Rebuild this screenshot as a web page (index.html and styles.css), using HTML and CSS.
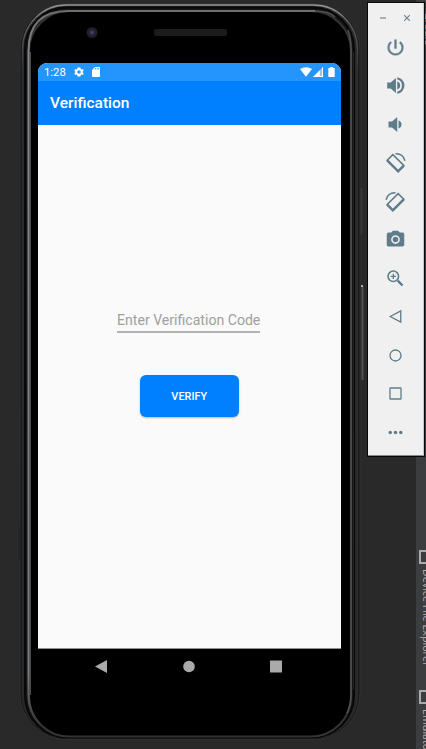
FILE: index.html
```html
<!DOCTYPE html>
<html lang="en">
<head>
<meta charset="utf-8">
<title>Verification</title>
<link rel="stylesheet" href="styles.css">
</head>
<body>
<main class="desktop">
  <aside class="ide">
    <span class="ide-top">Gradle</span>
    <span class="ide-tab device"><i></i>Device File Explorer</span>
    <span class="ide-tab emulator"><i></i>Emulator</span>
  </aside>
  <svg class="shell" viewBox="0 0 368 749" fill="none">
    <defs>
      <linearGradient id="rim" gradientUnits="userSpaceOnUse" x1="0" y1="11" x2="0" y2="725">
        <stop offset="0" stop-color="#6d6e70"/><stop offset=".06" stop-color="#85878a"/><stop offset=".93" stop-color="#77797b"/><stop offset="1" stop-color="#333"/>
      </linearGradient>
      <linearGradient id="edge" x1="0" y1="0" x2="0" y2="1">
        <stop offset="0" stop-color="#999"/><stop offset=".025" stop-color="#606060"/><stop offset=".09" stop-color="#303030"/><stop offset="1" stop-color="#292929"/>
      </linearGradient>
    </defs>
    <rect x="20" y="3.500" width="340" height="736" rx="46" fill="#191919" stroke="#303030"/>
    <rect x="22.500" y="5" width="335" height="733" rx="44" fill="#292929" stroke="url(#edge)" stroke-width="1.300"/>
    <rect x="25" y="7.500" width="329" height="730" rx="42" fill="#151515" stroke="#080808" stroke-width="2"/>
    <rect x="29" y="11" width="322" height="725.500" rx="40" fill="#000" stroke="#343434" stroke-width="2"/>
    <path d="M41 725Q28.500 713 28.500 695V51Q28.500 11 68 11H315" stroke="url(#rim)" stroke-width="2"/>
    <path d="M315 11Q329 11 335 17M348 30Q351 38 351 50V695Q351 705 347 713" stroke="#505050" stroke-width="1.600"/>
    <path d="M30.500 695V52" stroke="#4a4b4c"/>
    <path d="M353.500 690V52" stroke="#222"/>
    <path d="M361.500 188v46" stroke="#373737" stroke-width="2"/>
    <path d="M362.500 286v94" stroke="#505050" stroke-width="2"/>
    <path d="M361 286h2" stroke="#aaa" stroke-width="2"/>
    <path d="M20 527v33" stroke="#202020" stroke-width="1.500"/>
    <circle cx="92" cy="32.500" r="5.500" fill="#202024"/>
    <circle cx="92" cy="32.500" r="3" fill="#292b48"/>
    <circle cx="92" cy="32.500" r="1.200" fill="#454b77"/>
    <rect x="154" y="29" width="73" height="7" rx="2" fill="#1d1c1c"/>
  </svg>
  <section class="phone">
    <div class="screen">
      <header class="status">
        <span class="clock">1:28</span>
        <svg class="gear" viewBox="0 0 24 24"><path fill-rule="evenodd" d="M19.4 13a7.500 7.500 0 0 0 0-2l2.100-1.600-2-3.500-2.500 1a7.300 7.300 0 0 0-1.700-1L15 3H9l-.4 2.900a7.300 7.300 0 0 0-1.700 1l-2.400-1-2 3.500L4.600 11a7.500 7.500 0 0 0 0 2l-2.100 1.600 2 3.500 2.400-1a7.300 7.300 0 0 0 1.700 1L9 21h6l.3-2.900a7.300 7.300 0 0 0 1.700-1l2.500 1 2-3.500zM12 15.500a3.500 3.500 0 1 1 0-7 3.500 3.500 0 0 1 0 7z"/></svg>
        <svg class="sd" viewBox="4 2 16 20" preserveAspectRatio="none"><path fill-rule="evenodd" d="M18 2h-8L4 8v12c0 1.100.9 2 2 2h12c1.100 0 2-.9 2-2V4c0-1.100-.9-2-2-2zm-6 5h-1.500V4H12v3zm3 0h-1.500V4H15v3zm3 0h-1.500V4H18v3z"/></svg>
        <span class="space"></span>
        <svg class="wifi" viewBox="0 0 12 10"><path d="M0 2Q6-1.500 12 2L6 9.800z"/></svg>
        <svg class="signal" viewBox="0 0 11 11"><path d="M0 11L11 0V11z" opacity=".45"/><path d="M0 11L7.500 3.500V11zM9.800 1.200L11 0V11H7V9.800h2.800z"/></svg>
        <svg class="battery" viewBox="0 0 7 11"><path d="M2 0h3v1h1.500q.5 0 .5.500v9q0 .5-.5.500h-6Q0 11 0 10.500v-9Q0 1 .5 1H2z"/></svg>
      </header>
      <h1 class="appbar">Verification</h1>
      <form class="content">
        <input class="code" aria-label="Verification code" placeholder="Enter Verification Code">
        <button class="verify" type="button">VERIFY</button>
      </form>
    </div>
    <nav class="navigation">
      <svg viewBox="0 0 12 14"><path d="M0 7L12 .5v13z"/></svg>
      <svg viewBox="0 0 12 14"><circle cx="6" cy="7" r="5.800"/></svg>
      <svg viewBox="0 0 12 14"><rect y="1" width="12" height="12" rx=".5"/></svg>
    </nav>
  </section>
  <aside class="tools">
    <div class="window-actions">
      <svg viewBox="0 0 8 8"><path d="M1 4h6"/></svg>
      <svg viewBox="0 0 8 8"><path d="M1.200 1.200l5.600 5.600M6.800 1.200L1.200 6.800"/></svg>
    </div>
    <div class="tool-list">
      <svg viewBox="0 0 24 24"><path stroke="#5f7c8a" stroke-width=".5" d="M13 3h-2v10h2V3zm4.830 2.170l-1.420 1.420A6.920 6.920 0 0 1 19 12a7 7 0 1 1-11.420-5.420L6.170 5.170A8.930 8.930 0 0 0 3 12a9 9 0 0 0 18 0c0-2.740-1.230-5.180-3.170-6.830z"/></svg>
      <svg viewBox="0 0 24 24"><path d="M2.500 8.500v7h4l6 5v-17l-6 5zM14 7.500v9a4.700 4.700 0 0 0 0-9zm0-5v2.700a7 7 0 0 1 0 13.600v2.700a9.600 9.600 0 0 0 0-19z"/></svg>
      <svg viewBox="0 0 24 24"><path d="M4 8.500v7h4l6 5v-17l-6 5zm11.500-1v9a4.700 4.700 0 0 0 0-9z"/></svg>
      <svg viewBox="0 0 24 24"><path class="line" d="M9 3L2.500 9.500 15 22l6.500-6.500z"/><path class="heavy" d="M2.500 9.500L15 22l6.500-6.500"/><path class="line" d="M12 2Q20.500 1.500 22.800 10"/></svg>
      <svg viewBox="0 0 24 24"><path class="line" d="M15 3l6.500 6.500L9 22l-6.500-6.500z"/><path class="heavy" d="M21.500 9.500L9 22l-6.500-6.500"/><path class="line" d="M12 2Q3.500 1.500 1.200 10"/></svg>
      <svg viewBox="0 0 24 24"><path fill-rule="evenodd" d="M9 2L7.200 4H4a2 2 0 0 0-2 2v12c0 1.100.9 2 2 2h16c1.100 0 2-.9 2-2V6a2 2 0 0 0-2-2h-3.200L15 2zm3 15a5 5 0 1 1 0-10 5 5 0 0 1 0 10z"/><circle cx="12" cy="12" r="3.200"/></svg>
      <svg viewBox="0 0 24 24"><circle class="line" cx="9.500" cy="9.500" r="6"/><path class="heavy" d="M14.500 14.500l5.500 5.500"/><path class="thin" d="M9.500 6.500v6M6.500 9.500h6"/></svg>
      <svg viewBox="0 0 24 24"><path class="thin" d="M6 12L18 5.500v13z"/></svg>
      <svg viewBox="0 0 24 24"><circle class="thin" cx="12" cy="12" r="6.300"/></svg>
      <svg viewBox="0 0 24 24"><rect class="thin" x="5.700" y="5.700" width="12.600" height="12.600" rx=".6"/></svg>
      <svg viewBox="0 0 24 24"><circle cx="6" cy="12" r="2"/><circle cx="12" cy="12" r="2"/><circle cx="18" cy="12" r="2"/></svg>
    </div>
  </aside>
</main>
</body>
</html>
```

FILE: styles.css
```css
* { box-sizing: border-box; }
body { margin: 0; background: #292929; font-family: Roboto, sans-serif; }
svg { display: block; }
.desktop { position: relative; display: flex; width: 426px; height: 749px; overflow: hidden; background: #292929; }
.shell { position: absolute; inset: 0 auto auto 0; width: 368px; height: 749px; }
.ide { position: absolute; inset: 0 0 0 auto; width: 10px; overflow: hidden; background: #3b3d3f; color: #b0b2b3; font: 10.7px/13px "Open Sans", sans-serif; }
.ide-top, .ide-tab { position: absolute; left: 3px; writing-mode: vertical-rl; white-space: nowrap; }
.ide-top { top: 12px; left: 6px; }
.ide-tab { display: flex; align-items: center; gap: 5px; }
.ide-tab i { width: 14px; height: 14px; border: 2px solid #aaa; }
.device { top: 550px; }
.emulator { top: 690px; }
.phone { position: relative; width: 302.5px; margin: 63px 27.5px 0 38px; }
.screen { height: 585.5px; background: #fafafa; border-radius: 9px 9px 0 0; overflow: hidden; border-bottom: 1px solid #8b9291; }
.status { display: flex; align-items: center; height: 18px; padding: 0 6px; background: #2495fc; color: #fff; }
.status svg { fill: #fff; }
.clock { width: 22px; margin-right: 7px; font-size: 11.3px; line-height: 18px; padding-top: 1px; white-space: nowrap; }
.gear { width: 12px; height: 12px; margin-right: 7px; }
.sd { width: 8px; height: 10px; }
.space { flex: 1; }
.wifi { width: 12px; height: 10px; }
.signal { width: 10px; height: 10px; margin: 0 5px 0 1px; }
.battery { width: 7px; height: 10px; }
.appbar { display: flex; align-items: center; height: 43.5px; margin: 0; padding: 1px 12px 0; background: #007fff; color: #fff; font-size: 15.5px; font-weight: 500; }
.content { display: flex; flex-direction: column; align-items: center; padding: 182.5px 1.5px 0 0; }
.code { width: 143px; height: 26px; padding: 1px 0 0; border: 0; border-bottom: 2px solid #b3b3b3; border-radius: 0; outline: 0; background: transparent; font: 14.1px Roboto, sans-serif; }
.code::placeholder { color: #a0a0a0; opacity: 1; }
.verify { width: 99px; height: 42px; margin: 42px 0 0 1.5px; padding: 1px 0 0; border: 0; border-radius: 6px; background: #007fff; color: #fff; font: 500 10.9px Roboto, sans-serif; box-shadow: 0 1px 2px #0004; }
.navigation { display: grid; grid-template-columns: repeat(3, 12px); justify-content: center; gap: 75.5px; padding: 10.4px 1.5px 0 0; }
.navigation svg { width: 12px; height: 15px; fill: #aaa; }
.tools { position: relative; width: 55.5px; height: 452.5px; margin-top: 3px; background: #f0f0f0; border-right: 1px solid #c8c8c8; border-bottom: 1px solid #888; box-shadow: 0 0 0 1px #080808; }
.window-actions { display: flex; justify-content: space-between; padding: 11px 11.5px 0 11px; }
.window-actions svg { width: 8px; height: 8px; fill: none; stroke: #72858c; stroke-width: 1.2; }
.tool-list { display: grid; grid-template-rows: repeat(11, 38.5px); justify-content: center; align-items: center; padding: 6px .5px 0 0; }
.tool-list svg { width: 21px; height: 21px; fill: #5f7c8a; }
.tool-list .line, .tool-list .thin, .tool-list .heavy { fill: none; stroke: #5f7c8a; stroke-width: 1.8; }
.tool-list .thin { stroke-width: 1.5; }
.tool-list .heavy { stroke-width: 2.8; }
```
